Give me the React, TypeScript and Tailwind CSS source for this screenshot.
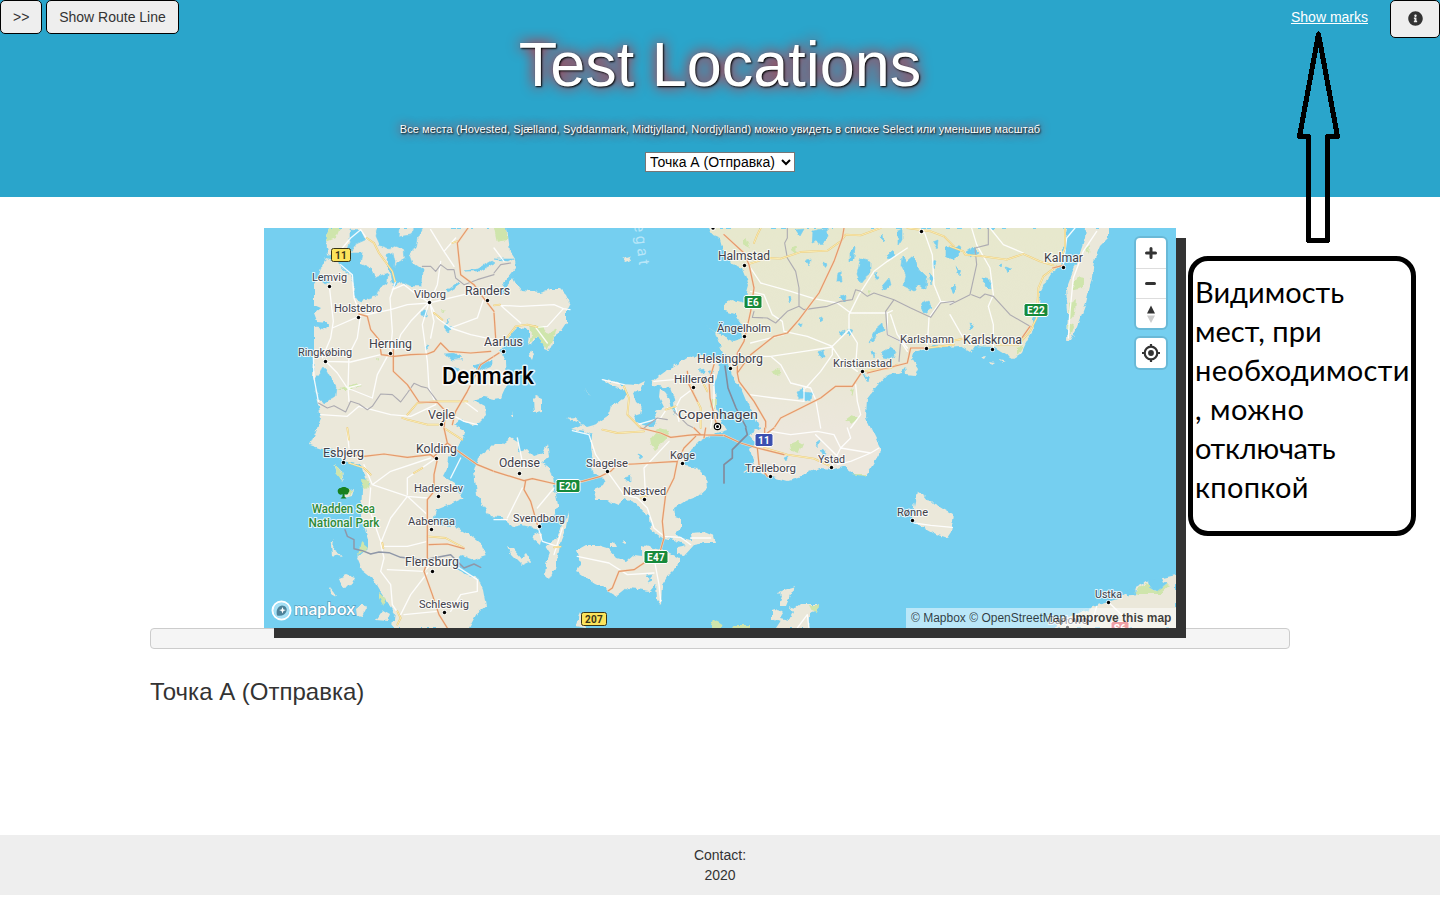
import React from 'react';
import { FaInfoCircle } from 'react-icons/fa';

const LAND = '#ebe8da';

const jutland =
  'M65 0 L62 13 L64 26 L74 34 L62 30 L57 40 L54 50 L50 56 L50 77 L57 80 L50 86 L53 94 L64 95 L62 101 L50 98 L50 130 L49 147 L51 160 L54 173 L57 190 L52 203 L46 217 L58 221 L66 219 L78 233 L97 237 L101 250 L106 256 L98 262 L97 287 L104 312 L104 320 L93 330 L98 342 L108 350 L115 362 L122 372 L131 385 L129 400 L205 400 L213 385 L222 378 L219 362 L214 350 L198 345 L189 336 L198 328 L210 332 L222 328 L217 316 L204 306 L190 298 L175 297 L170 291 L172 282 L182 278 L200 270 L192 262 L190 255 L179 248 L183 240 L184 229 L198 214 L201 203 L190 197 L196 192 L208 197 L216 194 L222 188 L221 178 L210 172 L220 169 L230 171 L237 170 L243 157 L242 133 L236 123 L243 114 L247 106 L253 100 L265 101 L265 108 L263 118 L268 116 L274 107 L281 113 L280 121 L285 123 L289 115 L290 108 L296 104 L302 95 L302 83 L306 75 L302 66 L297 61 L286 61 L276 64 L257 62 L252 56 L249 50 L243 58 L240 66 L232 68 L240 55 L252 40 L251 31 L246 23 L243 0 Z';
const funen =
  'M210 243 L214 230 L223 223 L230 216 L239 216 L247 210 L255 215 L254 225 L263 221 L270 228 L279 225 L283 215 L285 229 L278 235 L285 240 L289 250 L291 262 L294 277 L289 288 L276 294 L275 301 L258 297 L249 299 L237 289 L226 288 L219 278 L213 267 Z';
const zealand =
  'M302 190 L311 189 L323 199 L330 197 L345 187 L347 177 L360 172 L363 163 L347 157 L338 151 L356 156 L373 157 L381 153 L377 162 L369 165 L372 174 L378 179 L376 186 L370 188 L374 196 L389 199 L393 191 L391 184 L400 179 L395 169 L396 160 L402 166 L407 176 L411 187 L410 170 L406 160 L389 157 L388 154 L407 140 L423 129 L440 128 L455 133 L454 145 L450 157 L452 171 L454 188 L463 202 L447 207 L435 214 L423 226 L421 238 L433 240 L442 249 L443 260 L434 268 L423 272 L410 280 L411 288 L417 290 L417 300 L411 306 L415 310 L428 312 L427 305 L440 304 L450 308 L452 315 L441 315 L430 317 L421 327 L413 326 L414 319 L423 317 L410 312 L397 309 L387 302 L386 288 L378 282 L374 276 L361 270 L354 277 L342 272 L332 272 L330 262 L339 258 L342 252 L327 243 L329 234 L327 218 L328 207 L320 203 L307 201 L319 196 Z';
const lolland =
  'M313 322 L322 317 L334 317 L344 320 L353 330 L363 333 L370 327 L378 328 L378 317 L388 320 L402 323 L415 330 L415 336 L405 346 L398 357 L397 377 L393 372 L392 356 L386 363 L373 361 L363 360 L353 368 L340 360 L331 356 L322 350 L312 343 L317 335 Z';
const sweden =
  'M445 0 L449 8 L456 11 L459 22 L468 36 L478 40 L485 57 L480 75 L469 72 L460 76 L460 83 L470 86 L477 96 L479 110 L469 113 L457 107 L443 98 L452 104 L457 120 L465 136 L468 147 L478 163 L483 175 L492 191 L496 201 L485 207 L492 215 L486 221 L490 237 L478 245 L489 243 L500 247 L512 250 L523 253 L534 250 L545 244 L556 240 L569 241 L579 238 L590 246 L602 247 L608 238 L615 226 L616 219 L608 203 L602 190 L603 171 L612 159 L623 147 L637 144 L641 139 L642 146 L651 147 L654 140 L648 131 L650 124 L662 120 L670 118 L681 119 L696 118 L706 124 L710 118 L729 119 L737 124 L749 131 L757 126 L762 115 L770 101 L769 91 L775 78 L776 64 L782 53 L787 45 L796 38 L799 22 L804 0 Z';
const oland =
  'M822 0 L844 0 L844 10 L836 18 L830 33 L828 50 L822 75 L813 99 L806 112 L803 113 L804 84 L802 62 L808 46 L815 28 L821 10 Z';

const shores = [
  jutland,
  funen,
  zealand,
  lolland,
  oland,
  'M305 283 L302 300 L297 312 L295 323 L291 340 L285 352 L281 348 L282 336 L286 325 L281 317 L292 312 L297 300 Z',
  'M271 304 L278 307 L276 317 L269 311 Z',
  'M243 318 L249 321 L257 330 L262 325 L267 333 L258 337 L247 326 Z',
  'M273 168 L278 170 L278 184 L270 185 L269 172 Z',
  'M267 122 L270 126 L268 132 L265 127 Z',
  'M358 30 L365 28 L367 32 L361 34 Z',
  'M653 263 L660 267 L665 273 L674 277 L679 280 L690 286 L687 304 L683 310 L671 306 L655 297 L649 292 L650 278 Z',
  'M789 400 L805 389 L821 381 L838 376 L853 371 L869 361 L882 354 L899 350 L912 347 L912 400 Z',
  'M531 359 L526 367 L522 377 L515 377 L518 368 L514 364 Z',
  'M508 383 L514 381 L519 385 L516 390 L525 392 L529 384 L524 378 L531 380 L536 376 L552 376 L554 383 L546 386 L545 400 L512 400 L516 394 L508 391 Z',
  'M75 350 L83 347 L91 350 L87 358 L79 359 Z',
  'M67 317 L70 311 L69 322 L79 329 L68 327 Z',
  'M70 235 L78 244 L80 254 L73 245 Z',
  'M92 381 L98 376 L102 381 L98 389 L93 388 Z',
  'M66 359 L70 364 L72 369 L67 366 Z',
  'M82 263 L90 261 L88 268 L80 270 Z',
  'M112 392 L119 382 L126 386 L123 393 Z',
  'M346 317 L350 315 L352 319 L346 319 Z',
  'M358 314 L361 311 L361 316 Z',
  'M320 162 L327 168 L324 166 Z',
  'M245 188 L249 186 L249 183 L248 189 Z',
  'M314 392 L317 385 L322 400 L312 398 Z',
  'M716 129 L722 128 L720 131 Z',
  'M735 131 L742 133 L738 134 Z',
  'M726 134 L731 135 L728 137 Z',
];

/* Limfjord, inlets and Swedish lakes */
const waters = [
  'M114 0 L135 0 L134 9 L147 7 L150 0 L159 0 L154 10 L152 20 L145 24 L149 35 L159 42 L158 58 L147 58 L139 54 L130 57 L129 42 L134 34 L141 30 L140 22 L130 18 L124 21 L116 17 L112 8 Z',
  'M122 27 L129 24 L131 34 L130 50 L133 56 L130 60 L127 50 Z',
  'M86 2 L97 3 L101 12 L92 16 L86 25 L99 25 L97 36 L107 41 L111 50 L124 46 L123 56 L114 62 L112 68 L104 71 L97 73 L89 68 L91 56 L87 47 L77 40 L75 33 L82 25 L86 12 Z',
  'M50 153 L60 139 L65 148 L72 158 L71 168 L61 175 L54 171 Z',
  'M52 99 L61 94 L64 97 L60 101 Z',
  'M201 43 L213 41 L227 33 L230 35 L216 43 Z',
  'M183 62 L193 55 L195 57 L184 64 Z',
  'M158 84 L163 82 L162 88 L158 87 Z',
  'M180 99 L185 90 L183 97 L189 100 L184 104 Z',
  'M160 119 L165 118 L162 122 Z',
  'M181 126 L190 125 L197 128 L190 130 L199 132 L188 132 Z',
  'M184 139 L195 142 L189 146 Z',
  'M209 138 L228 132 L228 137 L214 143 Z',
  'M54 50 L60 47 L65 54 L61 56 Z',
  'M230 31 L250 31 L245 34 Z',
  'M435 142 L440 141 L440 146 Z',
  'M445 143 L450 142 L448 147 Z',
  'M374 226 L380 228 L376 231 Z',
  'M360 250 L367 248 L367 254 Z',
  'M389 346 L382 347 L388 353 L383 355 Z',
  'M638 27 L643 34 L650 28 L655 42 L663 50 L662 61 L654 57 L650 63 L640 58 L642 47 L637 38 Z',
  'M634 2 L638 0 L638 12 L634 18 Z',
  'M549 3 L563 0 L564 8 L557 18 L553 13 L548 15 Z',
  'M597 30 L606 33 L606 47 L601 51 L597 56 L593 46 Z',
  'M612 44 L615 49 L611 52 Z',
  'M619 57 L625 50 L627 58 L618 62 Z',
  'M574 45 L577 44 L578 53 L573 53 Z',
  'M657 76 L664 73 L668 80 L661 85 Z',
  'M576 69 L582 67 L581 74 Z',
  'M583 101 L588 102 L586 108 L583 105 Z',
  'M605 115 L611 102 L619 95 L620 102 L613 106 L609 112 Z',
  'M553 124 L560 122 L561 129 L555 129 Z',
  'M617 125 L626 120 L632 123 L629 131 L619 129 Z',
  'M607 122 L612 126 L610 130 Z',
  'M532 163 L539 161 L542 169 L535 171 Z',
  'M540 164 L548 165 L547 173 L539 171 Z',
  'M599 146 L606 150 L604 155 Z',
  'M542 32 L546 31 L545 37 Z',
  'M586 24 L591 19 L590 30 L586 34 Z',
  'M622 28 L628 22 L630 27 L624 31 Z',
  'M665 46 L670 50 L667 56 Z',
  'M668 33 L672 34 L670 40 Z',
  'M534 96 L538 95 L537 99 Z',
  'M554 90 L558 89 L557 93 Z',
  'M576 104 L580 102 L579 108 Z',
  'M525 68 L528 70 L525 74 Z',
  'M560 34 L563 36 L561 39 Z',
  'M532 2 L540 1 L536 8 Z',
  'M617 10 L619 6 L620 13 Z',
  'M686 18 L695 19 L697 23 L690 30 L685 24 Z',
  'M703 23 L709 19 L714 24 L706 29 Z',
  'M718 50 L726 52 L727 61 L722 58 Z',
  'M691 38 L697 42 L695 47 Z',
  'M687 60 L691 56 L690 66 Z',
  'M705 95 L710 98 L707 102 Z',
  'M735 37 L738 36 L737 40 Z',
  'M742 40 L747 42 L744 45 Z',
  'M669 14 L674 12 L673 22 Z',
  'M682 18 L690 22 L689 32 L682 27 Z',
  'M552 215 L556 212 L554 219 Z',
  'M556 222 L561 223 L560 229 Z',
  'M520 230 L524 228 L522 233 Z',
  'M884 352 L897 350 L902 356 L893 363 L885 358 Z',
  'M862 363 L871 360 L872 366 L864 367 Z',
  'M819 382 L826 379 L824 384 Z',
];

const greens = [
  'M65 0 L76 0 L72 10 L62 14 Z',
  'M230 0 L243 0 L243 12 L233 14 Z',
  'M265 98 L277 98 L283 106 L293 100 L290 108 L284 122 L280 118 L274 107 L264 117 L268 106 Z',
  'M72 162 L84 159 L93 156 L98 158 L84 162 Z',
  'M177 82 L182 83 L178 85 Z',
  'M112 130 L115 131 L113 134 Z',
  'M97 251 L106 252 L103 262 L98 258 Z',
  'M71 236 L78 245 L79 254 L73 246 Z',
  'M83 262 L88 262 L86 269 Z',
  'M97 314 L104 320 L98 324 L94 327 Z',
  'M386 210 L394 201 L405 203 L400 214 L391 222 L387 216 Z',
  'M526 216 L534 213 L539 216 L535 225 L527 222 Z',
  'M581 192 L588 187 L595 190 L587 196 Z',
  'M508 144 L514 141 L518 146 L510 147 Z',
  'M809 55 L815 49 L821 50 L819 60 L810 62 Z',
  'M805 75 L812 70 L811 86 L806 92 Z',
  'M804 98 L810 95 L806 108 Z',
  'M822 20 L826 17 L825 26 Z',
  'M753 120 L759 117 L753 128 Z',
  'M870 363 L882 356 L892 363 L903 356 L906 357 L896 366 L874 366 Z',
  'M545 377 L554 377 L553 385 L548 383 Z',
  'M447 397 L449 391 L460 398 L458 400 L447 400 Z',
  'M470 397 L485 397 L485 400 L468 400 Z',
  'M587 246 L603 246 L601 248 Z',
  'M115 365 L122 371 L119 377 L115 370 Z',
  'M529 19 L533 17 L532 26 L527 24 Z',
  'M603 62 L608 63 L605 66 Z',
  'M480 10 L486 14 L484 20 L480 16 Z',
  'M586 162 L590 160 L588 168 Z',
  'M448 172 L453 170 L452 182 L447 178 Z',
];

const Tile = ({ x, y, children }: { x: number; y: number; children: React.ReactNode }) => (
  <g transform={`translate(${x} ${y}) scale(0.33333)`}>{children}</g>
);

const White = ({ d }: { d: string }) => <path d={d} stroke="#ffffff" strokeOpacity="0.9" strokeWidth="4" />;
const Yellow = ({ d }: { d: string }) => (
  <>
    <path d={d} stroke="#ecca7c" strokeWidth="5.5" />
    <path d={d} stroke="#fdf3bd" strokeWidth="2.5" />
  </>
);
const Orange = ({ d }: { d: string }) => (
  <>
    <path d={d} stroke="#f6dcc0" strokeWidth="6.5" />
    <path d={d} stroke="#e39a6c" strokeWidth="3.6" />
  </>
);
const Border = ({ d }: { d: string }) => <path d={d} stroke="#aeacb2" strokeWidth="3.4" />;

const Roads = () => (
  <g fill="none" strokeLinejoin="round" strokeLinecap="round">
    <Tile x={0} y={0}>
      <White d="M290 5 L260 30 L235 60 M230 110 L265 140 L270 210 L290 260 L280 330 L255 380 L252 480 L255 520 M290 5 L310 35 M196 175 L208 280 L200 330 L175 390 M205 300 L285 265 L380 245 L430 230 L495 225 L600 200 L660 195 M395 160 L378 210 L385 310 L380 370 M385 185 L420 170 L445 190 L495 223 M530 100 L520 170 L497 222 L510 280 L500 330 M495 223 L440 280 L410 320 L395 365 M495 223 L475 290 L490 400 L495 480 L515 525 M185 400 L260 402 L350 380 M370 385 L340 440 L325 510 L250 480 L220 435 L185 400 M497 225 L520 270 L560 300 L620 320 L690 335 M560 300 L640 270 L660 210 M500 5 L540 70 L570 115 M540 70 L575 30 M148 385 L150 450 L165 530 M170 560 L250 565 L285 535 L380 560 L440 565 L515 530 M250 480 L290 470 M545 550 L600 580 L640 590 M600 520 L640 550" />
      <Border d="M163 525 L190 540 L210 533 L245 552 L260 520 L285 528 L310 545 L325 535 L350 498 L385 500 L410 522 L430 495 L450 466 L470 475 L490 480 L520 520" />
      <Border d="M475 115 L500 115 L515 130 L530 110 L550 125 L570 125 L575 150 L600 170 L640 155 L690 140" />
      <Yellow d="M308 30 L330 45 L345 75 L385 130 L393 160 M510 255 L535 275 M565 45 L585 38 M415 570 L430 575 L490 590 L530 590 M430 560 L460 525 L510 520 L610 520" />
      <Orange d="M285 258 L310 265 L320 305 L345 335 L352 380 L390 385 L440 380 L490 378 L510 370 L530 345 L555 370 L620 375 L680 370 M388 365 L388 430 L430 470 L465 522 L520 523 L545 550 L540 600 M612 0 L580 45 L590 140 L630 170 L655 205 L690 250 M690 385 L650 410 L610 490 L575 550 L565 590" />
    </Tile>
    <Tile x={230} y={0}>
      <White d="M20 232 L80 235 L180 230 L208 242 L160 295 L125 298 L160 345 M20 232 L80 285 M208 242 L228 245 M0 60 L30 100 M600 480 L560 510 L545 540 L555 580 M660 440 L660 530 L650 600 M430 590 L500 570 L520 540 M325 455 L390 470 M480 460 L540 455" />
      <Border d="M0 135 L20 110 L50 105 M450 600 L490 570 L520 575 M540 550 L580 590 L600 600" />
      <Yellow d="M0 232 L18 230 M35 335 L65 295 L100 290 L130 297 M390 475 L405 510 L400 560 L440 600 M580 450 L600 500 L620 540 L620 600 M620 450 L640 490 M515 545 L545 535" />
      <Orange d="M0 255 L5 330 L0 340 M0 385 L15 375 M660 410 L645 460 L648 510 L660 560 L670 600 M580 430 L585 470 L610 520" />
    </Tile>
    <Tile x={460} y={0}>
      <White d="M73 110 L110 165 L200 190 L270 212 L340 225 L380 255 L490 255 L505 248 M80 190 L120 200 L145 260 L175 280 L180 310 L250 325 L325 355 L375 305 L375 260 L405 200 L450 130 L490 100 L550 60 M80 345 L180 320 M75 385 L140 385 L240 370 L325 357 L325 380 L290 430 L245 480 M325 357 L350 395 L400 430 M375 305 L400 345 L395 410 M140 385 L170 410 L200 465 L260 480 L275 515 L290 600 M75 500 L150 510 L240 520 M395 470 L400 520 L410 560 L380 600 M490 255 L490 320 L530 340 L550 370 M500 260 L520 320 L550 360 M600 10 L625 80 L630 170 L650 220 L690 225 M650 220 L615 270 L610 350 M240 480 L240 520" />
      <Border d="M190 0 L190 30 L182 45 L190 90 L215 130 L225 180 L225 235 L240 245 L310 235 L350 220 L385 215 L395 185 L410 190 L430 205 L450 195 L510 215 L560 240 L620 268 L650 225 L690 220 M225 235 L190 250 L155 285 L130 270 L85 268 L90 250 M510 215 L485 250 L490 320 L530 340 L525 400" />
      <Yellow d="M75 108 L130 90 L170 92 L230 72 L310 68 L350 40 L365 20 L410 22 L470 0 M90 45 L100 20 L110 0 M550 0 L620 10 L660 25 L690 55 M415 430 L500 420 L520 410 M610 360 L690 350" />
      <Orange d="M0 20 L60 75 L75 110 L90 180 L80 250 L60 340 L40 375 L40 435 M360 0 L355 30 L330 100 L285 195 L225 275 L190 315 L150 325 L80 380 L40 435 L45 460 L90 520 L125 580 L125 600 M415 430 L385 475 L335 475 L290 510 L220 545 L170 570 L150 600 M430 435 L550 405 L560 360 L610 360" />
    </Tile>
    <Tile x={686} y={0}>
      <White d="M65 0 L80 50 L120 120 L130 200 L115 235 L130 290 L130 360 M120 0 L160 50 L220 75 M0 260 L40 330 M375 0 L350 30 L340 110 M440 10 L400 70 L370 150 L360 250 L355 330" />
      <Border d="M115 0 L115 50 L75 60 L80 110 L60 200 L30 215 L0 230 M65 200 L90 210 L105 198 L130 205 L180 260 L245 298" />
      <Yellow d="M0 55 L40 70 L45 80 L100 85 L170 95 L220 78 L270 100 L310 112 M320 115 L280 145 L265 180 L260 270 L240 310 L205 350 L140 350 M345 0 L345 60 L330 100 M0 340 L50 330" />
      <Orange d="M308 120 L340 112 M240 295 L205 345" />
    </Tile>
    <Tile x={0} y={200}>
      <White d="M250 15 L255 60 M300 110 L325 170 L430 205 L490 210 M325 170 L380 130 L500 90 M430 205 L490 260 M430 205 L380 270 L350 345 L360 390 L350 430 L380 470 L385 530 L405 560 M355 355 L430 355 L490 340 M320 180 L315 240 L350 340 M370 425 L480 430 L510 400 L570 410 L640 455 L640 490 L590 500 L560 550 M490 435 L440 500 L410 560 M420 560 L520 550 M430 200 L430 150 L510 95 M590 90 L560 150" />
      <path
        d="M243 305 L250 325 L270 335 L270 362 L295 368 L320 378 L345 372 L375 374 L410 388 L480 395 L560 380 L600 420 L630 408 L650 418"
        stroke="#8f97a8"
        strokeWidth="4.5"
      />
      <Yellow d="M250 0 L255 35 M255 105 L300 120 L320 140 M450 135 L475 120 M490 325 L545 330 L600 360 M355 345 L358 360 M400 550 L410 570 L400 590 M540 0 L595 35" />
      <Orange d="M250 80 L300 85 L360 78 L430 88 L500 80 L520 95 L510 140 L510 190 L490 215 L490 300 L490 400 L480 430 L505 500 L525 560 L550 600 M540 0 L550 45 L510 85 M495 350 L550 348 L600 362 M550 45 L590 75 L640 110 L690 130" />
    </Tile>
    <Tile x={230} y={200}>
      <White d="M85 180 L40 270 M130 240 L180 180 M40 275 L0 275 M130 290 L145 340 L190 355 M235 8 L285 20 L305 80 L340 130 L390 200 L430 210 L460 240 L480 300 L510 325 L560 328 M525 40 L450 120 L455 210 M250 385 L345 405 L400 440 L480 435 M480 390 L495 470 L500 520 M590 330 L650 330 M560 328 L590 350 M70 30 L85 100 M205 300 L180 380" />
      <Yellow d="M325 5 L370 15 L450 10 M440 210 L465 200 M180 358 L200 356" />
      <Orange d="M0 130 L90 158 L115 152 L185 168 L265 160 L320 145 L350 130 L370 110 L420 108 L550 100 M95 158 L90 185 L110 220 L130 290 M440 0 L500 15 L530 28 L580 22 L605 20 L690 22 M605 25 L570 60 L550 100 L540 150 L515 200 L505 280 L510 330 L500 365 M450 405 L420 425 L375 430 L355 480 L343 488 M600 0 L620 20 M635 0 L630 30" />
    </Tile>
    <Tile x={460} y={200}>
      <White d="M140 10 L200 20 L280 10 L330 20 L350 60 L440 75 L465 60 M370 0 L380 30 L350 60 L325 110 M440 75 L380 100 L340 110 M275 20 L340 85 M570 285 L620 292 L685 298 M220 600 L250 560 L255 600" />
      <Yellow d="M120 60 L190 80 L270 92 L320 115" />
      <Orange d="M0 22 L50 45 L100 60 L120 65 L180 80 M100 60 L105 110 L130 145 M122 0 L122 15 M150 0 L130 15" />
      <path d="M0 165 L0 110 L25 90 L25 65 L70 20 L65 0" stroke="#838b9c" strokeWidth="5" />
    </Tile>
    <path d="M461 138 L464 160 L472 180 L482 199" stroke="#838b9c" strokeWidth="1.6" />
    <Tile x={686} y={200}>
      <White d="M478 525 L515 560 L530 600 M440 535 L430 570" />
    </Tile>
  </g>
);

type City = [name: string, left: number, baseline: number, width: number, size: number, dotX: number, dotY: number];

const cities: City[] = [
  ['Lemvig', 48, 53, 35, 11.5, 65, 58],
  ['Holstebro', 70, 84, 48, 11.5, 94, 89],
  ['Viborg', 150, 70, 32, 11.5, 165, 74],
  ['Randers', 201, 67, 45, 12, 223, 72],
  ['Herning', 105, 120, 43, 12, 126, 125],
  ['Ringkøbing', 34, 128, 54, 11.5, 61, 133],
  ['Aarhus', 220, 118, 39, 12.5, 239, 123],
  ['Vejle', 164, 191, 27, 12, 177, 196],
  ['Esbjerg', 59, 229, 41, 12, 79, 234],
  ['Kolding', 152, 225, 41, 12, 172, 230],
  ['Haderslev', 150, 264, 49, 11.5, 174, 268],
  ['Aabenraa', 144, 297, 47, 11.5, 167, 301],
  ['Flensburg', 141, 338, 54, 12, 168, 343],
  ['Schleswig', 155, 380, 50, 11.5, 180, 384],
  ['Odense', 235, 239, 41, 12.5, 255, 245],
  ['Svendborg', 249, 294, 52, 11.5, 275, 298],
  ['Slagelse', 322, 239, 42, 11.5, 343, 243],
  ['Næstved', 359, 267, 43, 11.5, 380, 271],
  ['Køge', 406, 231, 25, 11.5, 418, 235],
  ['Hillerød', 410, 155, 40, 11.5, 429, 159],
  ['Helsingborg', 433, 135, 66, 12.5, 466, 140],
  ['Halmstad', 454, 32, 52, 12.5, 480, 37],
  ['Ängelholm', 453, 104, 54, 11.5, 480, 108],
  ['Kristianstad', 569, 139, 59, 11.5, 598, 143],
  ['Karlshamn', 636, 115, 54, 11.5, 662, 120],
  ['Karlskrona', 699, 116, 59, 12, 728, 121],
  ['Kalmar', 780, 34, 39, 12, 799, 39],
  ['Trelleborg', 481, 244, 51, 11.5, 506, 248],
  ['Ystad', 554, 235, 27, 11.5, 567, 239],
  ['Rønne', 633, 288, 31, 11.5, 648, 292],
  ['Ustka', 831, 370, 27, 11.5, 844, 374],
  ['Darłowo', 784, 396, 40, 11.5, 803, 399],
];

const Shield = ({
  x,
  y,
  w,
  label,
  fill,
  ink = '#ffffff',
  edge = '#ffffff',
}: {
  x: number;
  y: number;
  w: number;
  label: string;
  fill: string;
  ink?: string;
  edge?: string;
}) => (
  <g>
    <rect x={x} y={y} width={w} height="13" rx="2" fill={fill} stroke={edge} strokeWidth="1" />
    <text x={x + w / 2} y={y + 10} textAnchor="middle" fontSize="10" fontWeight="700" fill={ink} letterSpacing="0.3">
      {label}
    </text>
  </g>
);

const MapCanvas = () => (
  <svg
    viewBox="0 0 912 400"
    width="912"
    height="400"
    className="block overflow-hidden font-[Roboto,'Open_Sans',sans-serif]"
    role="img"
    aria-label="Denmark"
  >
    <defs>
      <filter id="coast" x="0" y="0" width="912" height="400" filterUnits="userSpaceOnUse">
        <feTurbulence type="fractalNoise" baseFrequency="0.16" numOctaves="2" seed="7" result="n" />
        <feDisplacementMap in="SourceGraphic" in2="n" scale="5" xChannelSelector="R" yChannelSelector="G" />
      </filter>
      <linearGradient id="south" x1="0" y1="0" x2="0" y2="1">
        <stop offset="0" stopColor="#e7e8cd" />
        <stop offset="0.5" stopColor="#e8e7d2" />
        <stop offset="0.8" stopColor="#ece7dc" />
      </linearGradient>
    </defs>
    <rect width="912" height="400" fill="#75cff0" />
    <g filter="url(#coast)">
      {shores.map((d, i) => (
        <path key={i} d={d} fill={LAND} />
      ))}
      <path d={sweden} fill="url(#south)" />
      {greens.map((d, i) => (
        <path key={i} d={d} fill="#cfe5ac" />
      ))}
      {waters.map((d, i) => (
        <path key={i} d={d} fill="#75cff0" stroke="#75cff0" strokeWidth="0.6" />
      ))}
    </g>
    <Roads />

    <g fill="#b8e6f8" fontSize="15.5" letterSpacing="3.6">
      <text transform="translate(369 -12) rotate(83)">tegat</text>
    </g>

    <g stroke="#ffffff" strokeOpacity="0.8" strokeWidth="2.2" strokeLinejoin="round" paintOrder="stroke" fill="#41414a">
      {cities.map(([name, x, y, w, size, dx, dy]) => (
        <g key={name}>
          <text x={x} y={y} fontSize={size} textLength={w} lengthAdjust="spacingAndGlyphs" paintOrder="stroke">
            {name}
          </text>
          <circle cx={dx + 0.5} cy={dy + 0.5} r="1.7" fill="#000000" strokeWidth="1.6" paintOrder="stroke" />
        </g>
      ))}
      <circle cx="449" cy="0" r="1.7" fill="#000000" />
      <circle cx="657.5" cy="3.5" r="1.7" fill="#000000" />
      <text x="414" y="191" fontSize="13.5" textLength="80" lengthAdjust="spacingAndGlyphs">
        Copenhagen
      </text>
      <text
        x="178"
        y="156"
        fontSize="23"
        fontWeight="500"
        fill="#000000"
        strokeWidth="3"
        textLength="92"
        lengthAdjust="spacingAndGlyphs"
      >
        Denmark
      </text>
      <g fill="#2f8a35" fontWeight="500" fontSize="12">
        <text x="48" y="285" textLength="63" lengthAdjust="spacingAndGlyphs">
          Wadden Sea
        </text>
        <text x="44.500" y="299" textLength="71" lengthAdjust="spacingAndGlyphs">
          National Park
        </text>
      </g>
    </g>
    <circle cx="453.5" cy="198.5" r="3.2" fill="#ffffff" stroke="#000000" strokeWidth="1.2" />
    <circle cx="453.5" cy="198.5" r="1.5" fill="#000000" />
    <path
      d="M74 264.500 C73 261.500 75 260 76.500 260 C78 258.500 82 258.500 83 260 C85.500 260.500 86 263 84.500 264.500 C84 267 82 267 80.500 266 L80.500 268.500 L82.500 270.500 L76.500 270.500 L78.500 268.500 L78.500 266 C77 267.500 74.500 266.500 74 264.500 Z"
      fill="#17801f"
    />

    <Shield x={67.5} y={20.500} w={19} label="11" fill="#fbe35b" ink="#3a3617" edge="#3a3617" />
    <Shield x={317.5} y={384.500} w={25} label="207" fill="#fbe35b" ink="#3a3617" edge="#3a3617" />
    <Shield x={480} y={67.500} w={18} label="E6" fill="#168a3b" />
    <Shield x={760} y={75.500} w={24} label="E22" fill="#168a3b" />
    <Shield x={292} y={251.500} w={24} label="E20" fill="#168a3b" />
    <Shield x={380} y={322.500} w={24} label="E47" fill="#168a3b" />
    <Shield x={491} y={205.500} w={18} label="11" fill="#3c50b0" />
    <Shield x={847} y={393.500} w={18} label="S6" fill="#e0404b" />

    <circle cx="17.500" cy="382.500" r="9" fill="none" stroke="#ffffff" strokeWidth="2" />
    <circle cx="17.500" cy="382.500" r="7.800" fill="#ffffff" fillOpacity="0.35" />
    <path
      d="M13 387.500 C12 383 13 378.500 18 377.500 C21.500 377.500 23.500 380.500 22.500 383 C21.500 387 17.500 388.500 13 387.500 Z"
      fill="#4d8299"
    />
    <path d="M18.500 379 L19.500 381.500 L22 382 L19.500 383 L18.500 385.500 L17.500 383 L15 382 L17.500 381.500 Z" fill="#ffffff" />
    <text
      x="30"
      y="387"
      fontSize="17"
      fontWeight="600"
      fill="#ffffff"
      stroke="#4f91ad"
      strokeWidth="1.4"
      strokeOpacity="0.8"
      paintOrder="stroke"
      textLength="61"
      lengthAdjust="spacingAndGlyphs"
      className="font-[Lato,sans-serif]"
    >
      mapbox
    </text>
  </svg>
);

const MapControls = () => (
  <div className="absolute right-[10px] top-[10px] flex w-[30px] flex-col gap-[10px]">
    <div className="flex flex-col overflow-visible rounded bg-white shadow-[0_0_0_2px_rgba(0,0,0,0.1)]">
      <button className="flex h-[30px] items-center justify-center" aria-label="Zoom in">
        <svg width="30" height="30" viewBox="0 0 30 30" stroke="#333" strokeWidth="3" strokeLinecap="round">
          <path d="M10.500 15 H19.500 M15 10.500 V19.500" />
        </svg>
      </button>
      <button className="flex h-[30px] items-center justify-center border-t border-[#ddd]" aria-label="Zoom out">
        <svg width="30" height="29" viewBox="0 0 30 29" stroke="#333" strokeWidth="3" strokeLinecap="round">
          <path d="M10.500 14.500 H18.500" />
        </svg>
      </button>
      <button className="flex h-[30px] items-center justify-center border-t border-[#ddd]" aria-label="Reset bearing">
        <svg width="30" height="29" viewBox="0 0 30 29">
          <path d="M11 14.500 L15 6.500 L19 14.500 Z" fill="#333" />
          <path d="M11 16.500 L15 24 L19 16.500 Z" fill="#ccc" />
        </svg>
      </button>
    </div>
    <button
      className="flex h-[30px] items-center justify-center rounded bg-white shadow-[0_0_0_2px_rgba(0,0,0,0.1)]"
      aria-label="Find my location"
    >
      <svg width="30" height="30" viewBox="0 0 30 30" fill="none" stroke="#333">
        <circle cx="15" cy="15" r="6.300" strokeWidth="2.200" />
        <circle cx="15" cy="15" r="2.900" fill="#333" stroke="none" />
        <path d="M15 6 V9 M15 21 V24 M6 15 H9 M21 15 H24" strokeWidth="2.200" />
      </svg>
    </button>
  </div>
);

const buttonClass =
  'rounded-[5px] border border-black bg-[#eee] px-3 text-sm leading-5 text-[#333]';

export default function App() {
  return (
    <div className="relative flex h-[900px] w-[1440px] flex-col overflow-hidden bg-white font-['Liberation_Sans',Arial,sans-serif] text-sm leading-5 text-[#333]">
      <header className="flex h-[197px] shrink-0 flex-col items-center bg-[#2aa5cb]">
        <div className="flex h-[30px] w-full items-start justify-between">
          <div className="flex gap-1">
            <button className={`${buttonClass} h-[34px] w-[42px]`}>&gt;&gt;</button>
            <button className={`${buttonClass} h-[34px] w-[133px] whitespace-nowrap`}>Show Route Line</button>
          </div>
          <div className="flex items-start gap-[22px]">
            <a href="#marks" className="pt-[7px] text-white underline">
              Show marks
            </a>
            <button className="flex h-[38px] w-[50px] items-center justify-center rounded-[5px] border border-black bg-[#eee] pb-[2px]">
              <FaInfoCircle size={15} color="#333" />
            </button>
          </div>
        </div>
        <h1 className="text-[63px] font-normal leading-[69px] text-white [text-shadow:1px_1px_2px_black,0_0_14px_red]">
          Test Locations
        </h1>
        <p className="mt-[20px] whitespace-nowrap text-[11px] leading-5 tracking-[0.094px] text-white [text-shadow:1px_1px_2px_black,0_0_11px_red]">
          Все места (Hovested, Sjælland, Syddanmark, Midtjylland, Nordjylland) можно увидеть в списке Select или уменьшив масштаб
        </p>
        <select className="mt-[13px] h-5 w-[150px] border border-[#767676] bg-white text-sm leading-none text-black">
          <option>Точка А (Отправка)</option>
        </select>
      </header>

      <main className="flex h-[638px] shrink-0 flex-col items-center pt-[31px]">
        <section className="relative z-10 h-[400px] w-[912px] shrink-0 shadow-[10px_10px_0_0_#333]">
          <MapCanvas />
          <MapControls />
          <div className="absolute bottom-0 right-0 flex h-5 w-[270px] items-center whitespace-nowrap bg-white/50 pl-[5px] text-xs text-black/75">
            <span>© Mapbox © OpenStreetMap</span>
            <span className="ml-[6px] font-bold">Improve this map</span>
          </div>
        </section>
        <div className="h-[21px] w-[1140px] shrink-0 rounded border border-[#ccc] bg-[#f5f5f5]" />
        <h3 className="mt-[30px] w-[1140px] text-2xl leading-[26px]">Точка А (Отправка)</h3>
      </main>

      <footer className="flex h-[60px] shrink-0 flex-col items-center bg-[#eee] pt-[10px]">
        <span>Contact:</span>
        <span>2020</span>
      </footer>

      <svg
        className="pointer-events-none absolute left-[1290px] top-[25px] z-20"
        width="60"
        height="222"
        viewBox="1290 25 60 222"
        fill="none"
        stroke="#000"
        strokeWidth="5"
        strokeLinejoin="round"
        shapeRendering="crispEdges"
      >
        <path d="M1318.500 34 L1299.500 136.500 H1308.500 V240.500 H1327.500 V136.500 H1337.500 Z" />
      </svg>
      <aside className="absolute left-[1188px] top-[256px] z-20 h-[280px] w-[228px] rounded-[20px] border-[5px] border-black bg-white pl-[2px] pt-[11px] font-[Lato,'Open_Sans',sans-serif] text-[29px] leading-[39px] text-black">
        <div className="whitespace-nowrap">Видимость</div>
        <div className="whitespace-nowrap tracking-[0.05px]">мест, при</div>
        <div className="whitespace-nowrap tracking-[0.3px]">необходимости</div>
        <div className="whitespace-nowrap tracking-[0.5px]">, можно</div>
        <div className="whitespace-nowrap tracking-[-0.25px]">отключать</div>
        <div className="whitespace-nowrap tracking-[0.3px]">кпопкой</div>
      </aside>
    </div>
  );
}
